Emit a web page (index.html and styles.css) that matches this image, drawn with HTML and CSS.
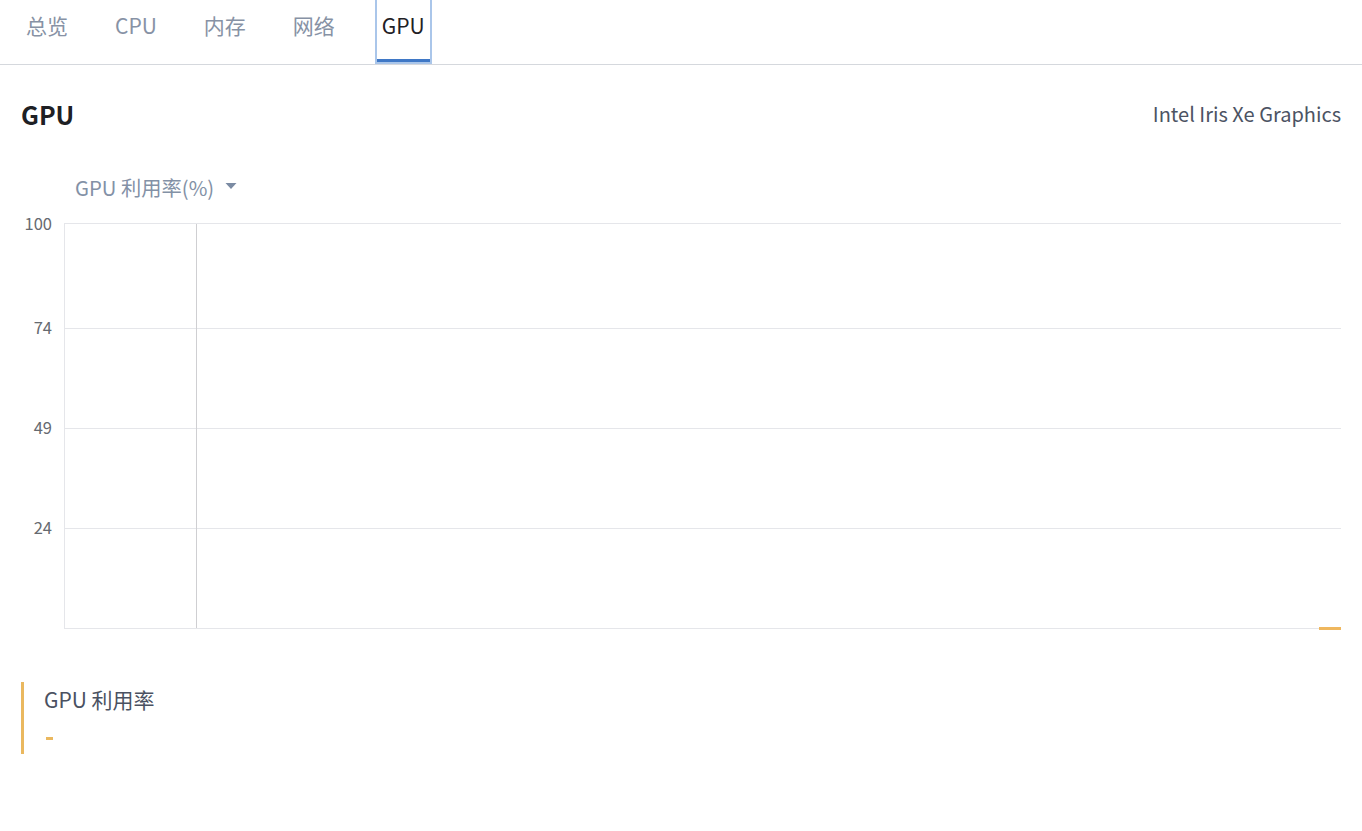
FILE: index.html
```html
<!DOCTYPE html>
<html lang="zh-CN">
<head>
<meta charset="utf-8">
<title>GPU</title>
<link rel="stylesheet" href="styles.css">
</head>
<body>
<nav class="tabs">
  <div class="tab">总览</div>
  <div class="tab">CPU</div>
  <div class="tab">内存</div>
  <div class="tab">网络</div>
  <div class="tab active">GPU</div>
</nav>
<main class="panel">
  <div class="title-row">
    <h1 class="title">GPU</h1>
    <div class="device">Intel Iris Xe Graphics</div>
  </div>
  <div class="metric-select">
    <span>GPU 利用率(%)</span>
    <svg class="caret" width="12" height="8" viewBox="0 0 12 8"><path d="M0.5 1 L11.5 1 L6 7 Z" fill="#7b8ba3"/></svg>
  </div>
  <svg class="chart" width="1362" height="425" viewBox="0 0 1362 425">
    <g class="grid" stroke="#e5e6ea" stroke-width="1" shape-rendering="crispEdges">
      <line x1="64" y1="13.5" x2="1341" y2="13.5"/>
      <line x1="64" y1="118.5" x2="1341" y2="118.5"/>
      <line x1="64" y1="218.5" x2="1341" y2="218.5"/>
      <line x1="64" y1="318.5" x2="1341" y2="318.5"/>
      <line x1="64" y1="418.5" x2="1341" y2="418.5"/>
      <line x1="64.5" y1="13" x2="64.5" y2="419"/>
    </g>
    <line x1="196.5" y1="14" x2="196.5" y2="418" stroke="#cfcfd2" stroke-width="1" shape-rendering="crispEdges"/>
    <rect x="1319" y="417" width="22" height="3" fill="#efb75e"/>
    <g class="axis" fill="#666a70" font-size="16.5" text-anchor="end">
      <text x="52" y="20">100</text>
      <text x="52" y="124">74</text>
      <text x="52" y="224">49</text>
      <text x="52" y="324">24</text>
    </g>
  </svg>
  <div class="legend">
    <div class="legend-name">GPU 利用率</div>
    <div class="legend-value"><span class="dash">-</span></div>
  </div>
</main>
</body>
</html>
```
FILE: styles.css
```css
* { box-sizing: border-box; }
html, body {
  margin: 0;
  padding: 0;
  background: #ffffff;
}
body {
  font-family: "Noto Sans CJK SC", "Noto Sans", sans-serif;
  color: #23262b;
}
.tabs {
  display: flex;
  align-items: stretch;
  height: 65px;
  padding-left: 19px;
  gap: 33px;
  border-bottom: 1px solid #d5d8dd;
}
.tab {
  padding: 11px 5px 0;
  border: 2px solid transparent;
  border-top: 0;
  font-size: 21px;
  line-height: 28px;
  color: #8792a5;
  height: 64px;
}
.tab.active {
  color: #1f2125;
  border-color: #aac6ea;
  box-shadow: inset 0 -3px 0 #3f78c6;
}
.panel {
  padding: 0 21px;
}
.title-row {
  display: flex;
  justify-content: space-between;
  align-items: center;
  padding-top: 33px;
  height: 65px;
}
.title {
  margin: 0;
  font-size: 25px;
  font-weight: 600;
  line-height: 32px;
  color: #1e2024;
}
.device {
  font-size: 20px;
  color: #4c5363;
  line-height: 32px;
}
.metric-select {
  display: flex;
  align-items: center;
  gap: 11px;
  margin-left: 54px;
  margin-top: 44px;
  font-size: 20.3px;
  line-height: 26px;
  color: #8391a6;
  height: 26px;
}
.caret {
  display: block;
  margin-top: -2px;
}
.chart {
  display: block;
  margin: 10px 0 0 -21px;
  font-family: "Noto Sans CJK SC", "Noto Sans", sans-serif;
}
.legend {
  margin-top: 47px;
  border-left: 3px solid #eab85f;
  height: 72px;
  padding: 4px 0 0 20px;
}
.legend-name {
  font-size: 21px;
  line-height: 26px;
  color: #4a5161;
}
.legend-value {
  height: 26px;
  margin-top: 13px;
  display: flex;
  align-items: center;
}
.dash {
  display: block;
  width: 7px;
  height: 3px;
  margin-left: 2px;
  background: #eab85f;
  overflow: hidden;
  color: transparent;
  font-size: 3px;
  line-height: 3px;
}
```
